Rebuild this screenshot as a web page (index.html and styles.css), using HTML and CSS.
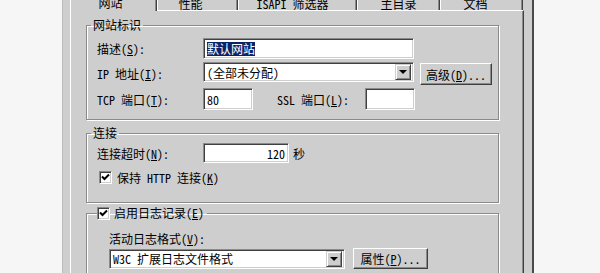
FILE: index.html
```html
<!DOCTYPE html>
<html lang="zh-CN">
<head>
    <meta charset="UTF-8">
    <meta name="viewport" content="width=device-width, initial-scale=1.0">
    <title>默认网站 属性</title>
    <link rel="stylesheet" href="styles.css">
</head>
<body>

    <div class="dialog">
        <div class="tabs">
            <div class="tab active">网站</div>
            <div class="tab t-perf">性能</div>
            <div class="tab t-isapi">ISAPI 筛选器</div>
            <div class="tab t-home">主目录</div>
            <div class="tab t-docs">文档</div>
        </div>

        <div class="panel">
            <fieldset class="group g-site">
                <legend>网站标识</legend>
                <div class="group-body">
                    <div class="row r1">
                        <span class="label">描述(<u>S</u>):</span>
                        <div class="field w-desc"><span class="selected">默认网站</span></div>
                    </div>
                    <div class="row r2">
                        <span class="label">IP 地址(<u>I</u>):</span>
                        <div class="field combo w-desc">
                            <span class="combo-text">(全部未分配)</span>
                            <span class="drop"><span class="arrow"></span></span>
                        </div>
                        <button class="btn b-adv">高级(<u>D</u>)...</button>
                    </div>
                    <div class="row r3">
                        <span class="label">TCP 端口(<u>T</u>):</span>
                        <div class="field w-port">80</div>
                        <span class="label ssl">SSL 端口(<u>L</u>):</span>
                        <div class="field w-port"></div>
                    </div>
                </div>
            </fieldset>

            <fieldset class="group g-conn">
                <legend>连接</legend>
                <div class="group-body">
                    <div class="row r-timeout">
                        <span class="label">连接超时(<u>N</u>):</span>
                        <div class="field w-timeout num">120</div>
                        <span class="unit">秒</span>
                    </div>
                    <div class="row r-check">
                        <span class="check"><svg width="9" height="9" viewBox="0 0 9 9"><path d="M1 3.5 L3.5 6 L8 1.5" fill="none" stroke="#000" stroke-width="2"/></svg></span>
                        <span>保持 HTTP 连接(<u>K</u>)</span>
                    </div>
                </div>
            </fieldset>

            <fieldset class="group g-log">
                <legend class="check-legend">
                    <span class="check"><svg width="9" height="9" viewBox="0 0 9 9"><path d="M1 3.5 L3.5 6 L8 1.5" fill="none" stroke="#000" stroke-width="2"/></svg></span>
                    <span>启用日志记录(<u>E</u>)</span>
                </legend>
                <div class="group-body">
                    <div class="row r-loglabel">活动日志格式(<u>V</u>):</div>
                    <div class="row r-log">
                        <div class="field combo w-log">
                            <span class="combo-text">W3C 扩展日志文件格式</span>
                            <span class="drop"><span class="arrow"></span></span>
                        </div>
                        <button class="btn b-prop">属性(<u>P</u>)...</button>
                    </div>
                </div>
            </fieldset>
        </div>
    </div>

</body>
</html>
```

FILE: styles.css
```css
body {
    margin: 0;
    padding: 0;
    background-color: #f6f6f6;
    font-family: "Noto Sans Mono CJK SC", "Noto Sans CJK SC", sans-serif;
    font-size: 12px;
    color: #000;
    height: 273px;
    overflow: hidden;
}
u {
    text-decoration: underline;
    text-underline-offset: 1px;
}
.dialog {
    margin-left: 62px;
    width: 454px;
    height: 300px;
    padding: 0 8px 0 7px;
    background-color: #cecece;
    border-left: 1px solid #bdbdbd;
    border-right: 2px solid #4a4a4a;
}
.tabs {
    display: flex;
    height: 18px;
    margin-top: -8px;
    align-items: flex-end;
}
.tab {
    box-sizing: border-box;
    height: 18px;
    padding-top: 4px;
    line-height: 14px;
    text-align: center;
    border-top: 1px solid #fff;
    border-left: 1px solid #fff;
    border-right: 1px solid #404040;
    box-shadow: inset -1px 0 0 #8a8a8a;
}
.tab.active {
    position: relative;
    z-index: 1;
    width: 87px;
    height: 19px;
    margin-bottom: -1px;
    padding-top: 3px;
    padding-right: 6px;
    background-color: #cecece;
}
.t-perf { width: 81px; padding-right: 14px; }
.t-isapi { width: 119px; padding-right: 10px; }
.t-home { width: 83px; }
.t-docs { width: 83px; padding-right: 12px; }
.panel {
    height: 280px;
    padding: 7px 24px 0 15px;
    border-top: 1px solid #fff;
    border-left: 1px solid #fff;
    border-right: 1px solid #404040;
    box-shadow: inset -1px 0 0 #8a8a8a;
}
.group {
    margin: 0;
    padding: 0;
    min-width: 0;
    border: 1px solid #8a8a8a;
    box-shadow: 1px 1px 0 #fff, inset 1px 1px 0 #fff;
}
.group legend {
    margin-left: 4px;
    padding: 0 2px;
    line-height: 14px;
}
.group-body {
    padding-left: 10px;
}
.g-site .group-body {
    padding-top: 6px;
    padding-bottom: 9px;
}
.g-conn {
    margin-top: 6px;
}
.g-conn .group-body {
    padding-top: 3px;
    padding-bottom: 18px;
}
.g-log {
    margin-top: 3px;
}
.g-log .group-body {
    padding-top: 11px;
    padding-left: 22px;
    padding-bottom: 40px;
}
.row {
    display: flex;
    align-items: center;
}
.r1 { height: 21px; margin-bottom: 3px; }
.r2 { height: 23px; margin-bottom: 3px; }
.r3 { height: 22px; }
.r-timeout { height: 20px; margin-bottom: 7px; }
.r-check { height: 14px; }
.r-loglabel { height: 14px; margin-bottom: 3px; }
.r-log { height: 21px; }
.label {
    width: 106px;
    flex-shrink: 0;
}
.label.ssl {
    width: 88px;
    margin-left: 24px;
}
.field {
    box-sizing: border-box;
    display: flex;
    align-items: center;
    height: 100%;
    padding: 0 3px;
    background-color: #fff;
    border-top: 1px solid #8a8a8a;
    border-left: 1px solid #8a8a8a;
    border-bottom: 1px solid #fff;
    border-right: 1px solid #fff;
    box-shadow: inset 1px 1px 0 #404040, inset -1px -1px 0 #cecece;
}
.w-desc { width: 211px; }
.r2 .field { height: 20px; align-self: flex-start; }
.w-port { width: 50px; }
.w-timeout { width: 86px; }
.w-log { width: 236px; height: 20px; }
.num {
    justify-content: flex-end;
}
.unit {
    margin-left: 4px;
}
.selected {
    background-color: #0a246a;
    color: #fff;
    line-height: 14px;
}
.combo {
    justify-content: space-between;
    padding-right: 2px;
}
.drop {
    box-sizing: border-box;
    width: 16px;
    height: 16px;
    display: flex;
    align-items: center;
    justify-content: center;
    background-color: #cecece;
    border-top: 1px solid #cecece;
    border-left: 1px solid #cecece;
    border-bottom: 1px solid #404040;
    border-right: 1px solid #404040;
    box-shadow: inset 1px 1px 0 #fff, inset -1px -1px 0 #8a8a8a;
}
.arrow {
    width: 0;
    height: 0;
    border-left: 4px solid transparent;
    border-right: 4px solid transparent;
    border-top: 4px solid #000;
}
.btn {
    box-sizing: border-box;
    font-family: inherit;
    font-size: 12px;
    padding: 0;
    color: #000;
    background-color: #cecece;
    border-top: 1px solid #fff;
    border-left: 1px solid #fff;
    border-bottom: 1px solid #404040;
    border-right: 1px solid #404040;
    box-shadow: inset -1px -1px 0 #8a8a8a;
}
.b-adv {
    width: 72px;
    height: 22px;
    margin-left: 6px;
    align-self: flex-end;
}
.b-prop {
    width: 75px;
    height: 21px;
    margin-left: 8px;
}
.check {
    box-sizing: border-box;
    display: inline-flex;
    align-items: center;
    justify-content: center;
    width: 13px;
    height: 13px;
    margin-left: 2px;
    margin-right: 5px;
    background-color: #fff;
    border-top: 1px solid #8a8a8a;
    border-left: 1px solid #8a8a8a;
    border-bottom: 1px solid #fff;
    border-right: 1px solid #fff;
    box-shadow: inset 1px 1px 0 #404040, inset -1px -1px 0 #cecece;
}
.group legend.check-legend {
    display: flex;
    align-items: center;
    margin-left: 10px;
    padding: 0 3px 0 0;
}
.check-legend .check {
    margin-left: 0;
    margin-right: 4px;
}
```
